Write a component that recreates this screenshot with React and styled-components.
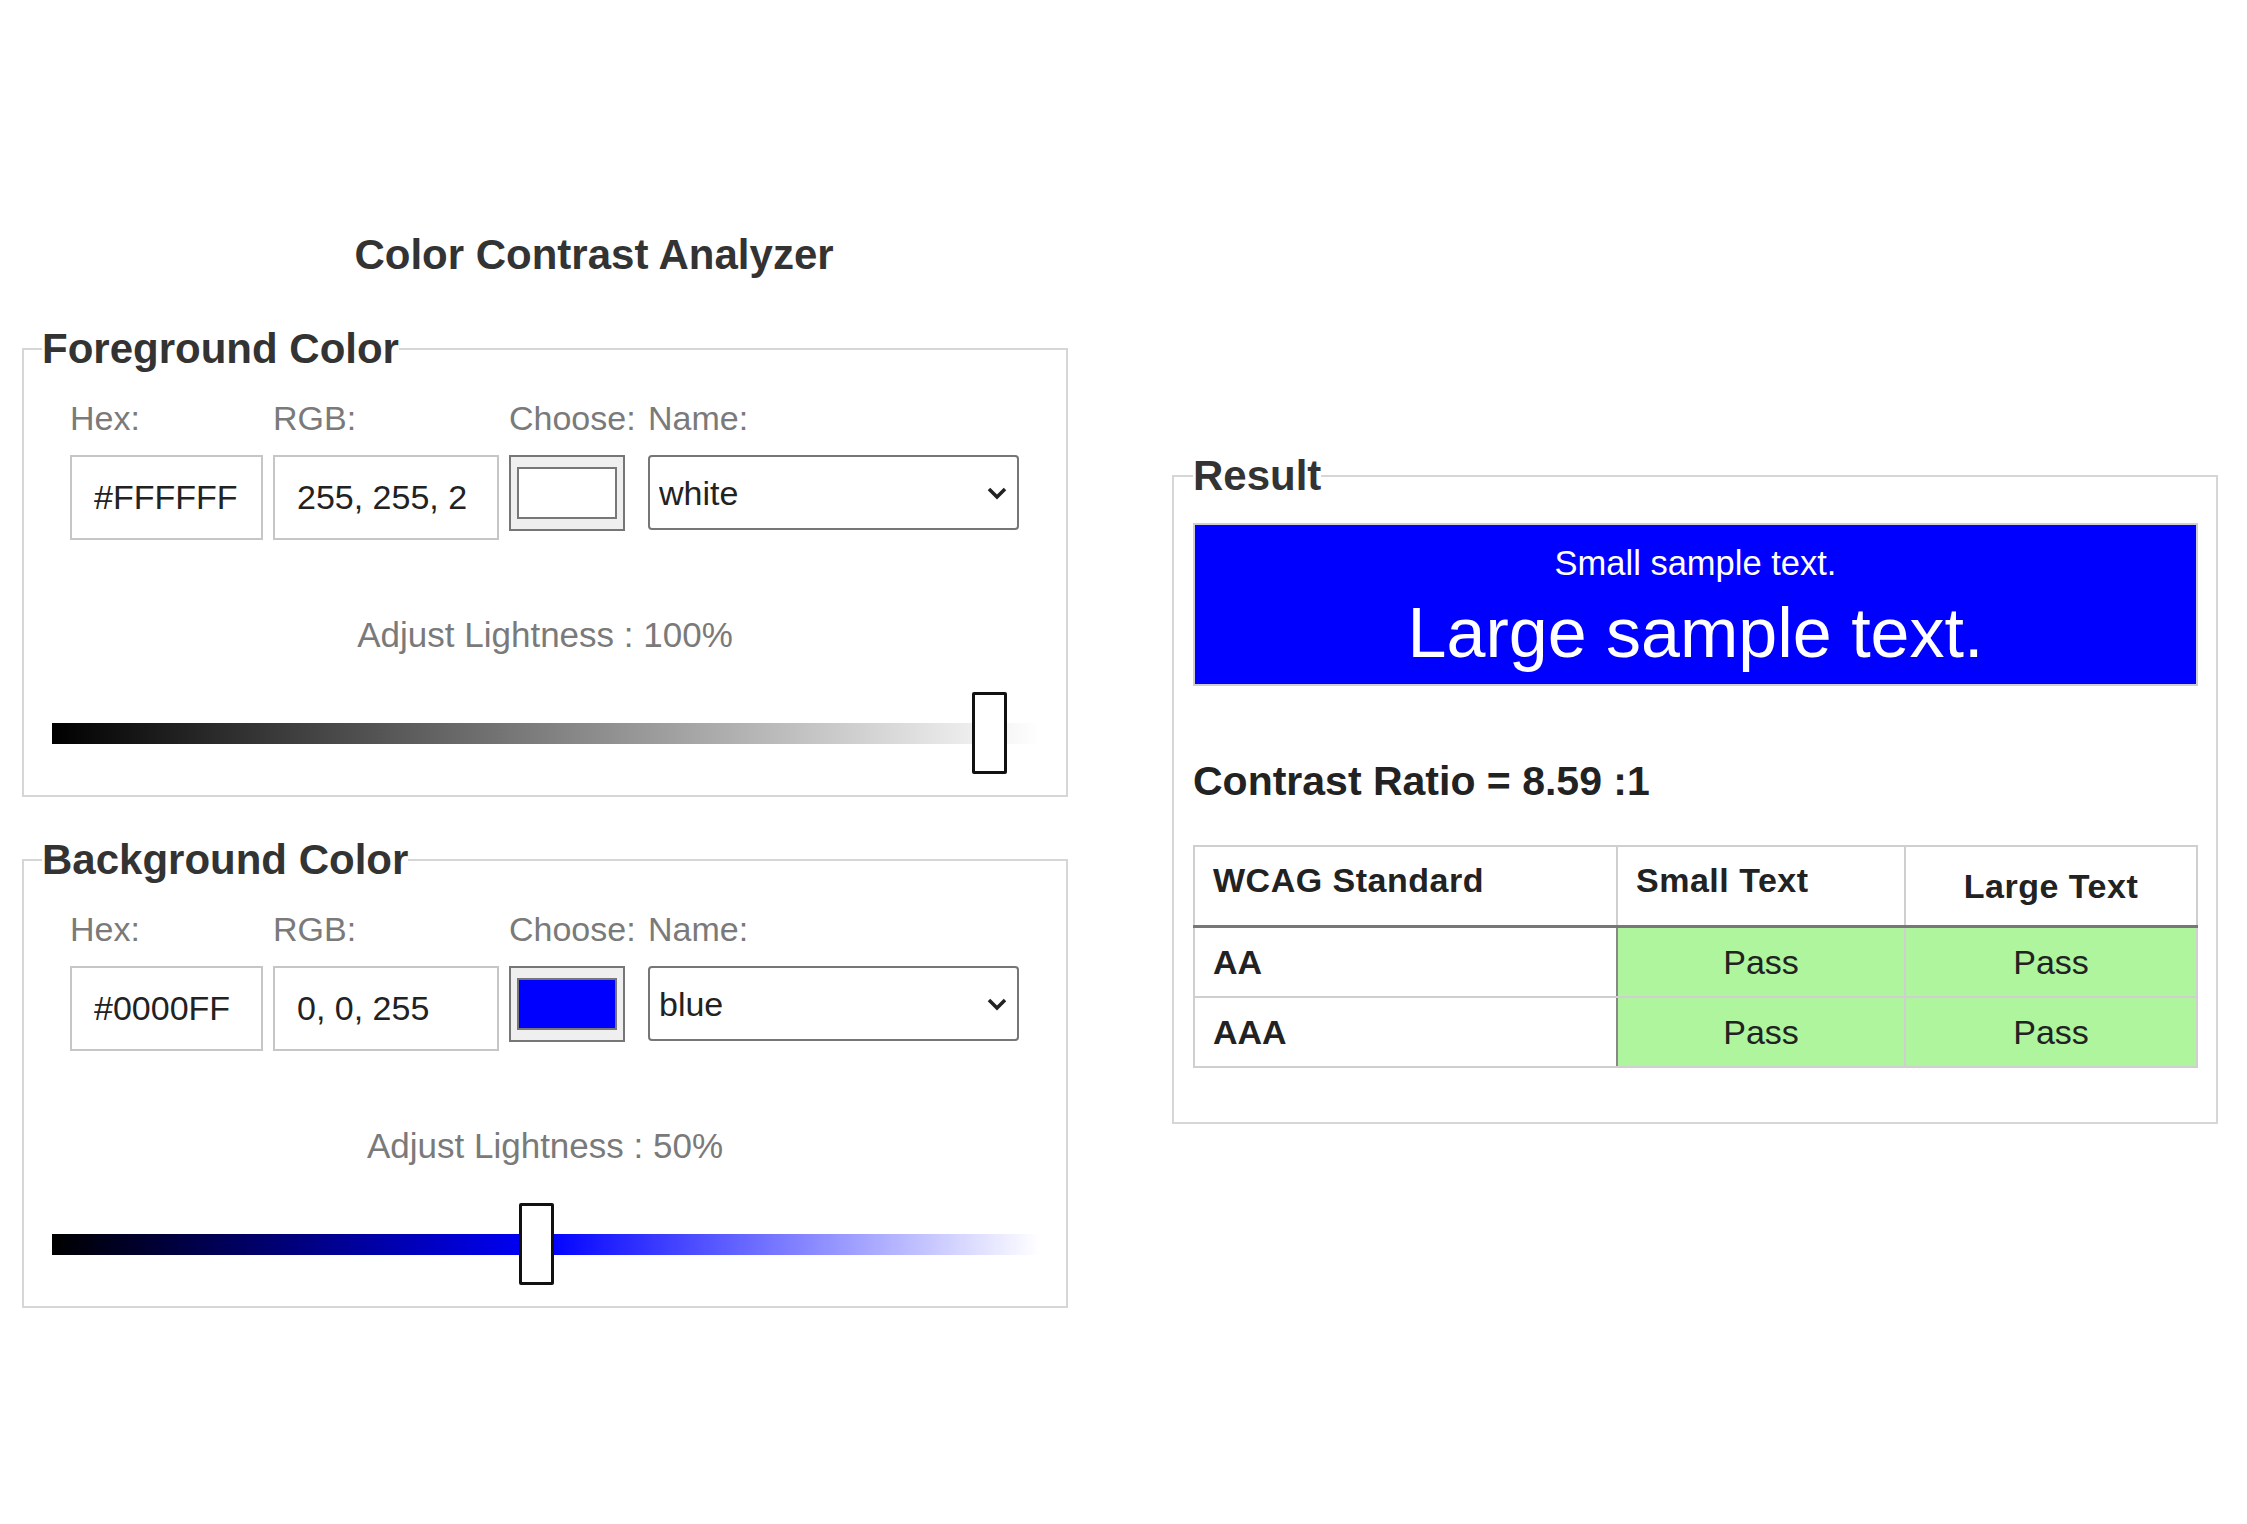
import React from 'react';
import styled, { createGlobalStyle } from 'styled-components';

const GlobalStyle = createGlobalStyle`
  html, body {
    margin: 0;
    padding: 0;
    background: #fff;
  }
  body {
    font-family: "Liberation Sans", Arial, Helvetica, sans-serif;
    color: #222;
  }
`;

const Page = styled.div`
  display: flex;
  align-items: flex-start;
  gap: 104px;
  width: 2247px;
  min-height: 1524px;
  box-sizing: border-box;
  padding: 231px 29px 0 22px;
`;

const Column = styled.div`
  flex: none;
  width: 1046px;
  display: flex;
  flex-direction: column;
  margin-top: ${p => p.$offset || 0}px;
`;

const Title = styled.h1`
  margin: 0;
  padding-left: 98px;
  font-size: 42px;
  line-height: 48px;
  font-weight: 700;
  color: #333;
  text-align: center;
`;

const Fieldset = styled.fieldset`
  margin: ${p => p.$top}px 0 0;
  padding: 0 18px 21px;
  border: 2px solid #d6d6d6;
  min-width: 0;
`;

const Legend = styled.legend`
  padding: 0;
  font-size: 42px;
  line-height: 46px;
  font-weight: 700;
  color: #333;
`;

const FieldRow = styled.div`
  display: flex;
  align-items: flex-start;
  gap: 10px;
  margin: 26px 0 0 28px;
`;

const Field = styled.div`
  display: flex;
  flex-direction: column;
  gap: 17px;
  width: ${p => p.$w}px;
  flex: none;
`;

const Label = styled.span`
  font-size: 34px;
  line-height: 40px;
  color: #7a7a7a;
  white-space: nowrap;
`;

const TextInput = styled.input`
  width: 100%;
  height: 85px;
  box-sizing: border-box;
  margin: 0;
  padding: 0 ${p => p.$padRight || 6}px 0 22px;
  border: 2px solid #c6c6c6;
  font-family: inherit;
  font-size: 34px;
  color: #222;
  background: #fff;
  outline: none;
`;

const Swatch = styled.div`
  width: 116px;
  height: 76px;
  box-sizing: border-box;
  padding: 10px 6px;
  border: 2px solid #767676;
  background: #efefef;
`;

const SwatchColor = styled.div`
  height: 100%;
  box-sizing: border-box;
  border: 2px solid #777;
  background: ${p => p.$color};
`;

const SelectWrap = styled.div`
  position: relative;
  width: 100%;
`;

const Select = styled.select`
  appearance: none;
  width: 100%;
  height: 75px;
  box-sizing: border-box;
  margin: 0;
  padding: 0 0 0 9px;
  border: 2px solid #767676;
  border-radius: 4px;
  background: #fff;
  font-family: inherit;
  font-size: 34px;
  color: #222;
`;

const Chevron = styled.svg`
  position: absolute;
  right: 11px;
  top: 31px;
  width: 22px;
  height: 14px;
  pointer-events: none;
`;

const AdjustLabel = styled.div`
  margin-top: 75px;
  font-size: 35px;
  line-height: 40px;
  color: #7a7a7a;
  text-align: center;
`;

const Slider = styled.div`
  position: relative;
  display: flex;
  align-items: center;
  height: 82px;
  margin: 37px 9px 0 10px;
`;

const Track = styled.div`
  width: 100%;
  height: 21px;
  background: ${p => p.$gradient};
`;

const Thumb = styled.div`
  position: absolute;
  top: 0;
  width: 35px;
  height: 82px;
  box-sizing: border-box;
  border: 3px solid #111;
  border-radius: 2px;
  background: #fff;
`;

const ResultSet = styled(Fieldset)`
  padding: 0 18px 54px 19px;
`;

const SampleBox = styled.div`
  margin-top: 24px;
  padding: 18px 0 11px;
  border: 2px solid #cfcfcf;
  background: ${p => p.$bg};
  color: ${p => p.$fg};
  text-align: center;
`;

const SmallSample = styled.div`
  font-size: 34.5px;
  line-height: 40px;
`;

const LargeSample = styled.div`
  margin-top: 10px;
  font-size: 70px;
  line-height: 80px;
`;

const Ratio = styled.div`
  margin-top: 71px;
  font-size: 41px;
  line-height: 48px;
  font-weight: 700;
  color: #222;
`;

const Table = styled.table`
  margin-top: 40px;
  width: 100%;
  border-collapse: collapse;
  border: 2px solid #cfcfcf;
  table-layout: fixed;
`;

const Th = styled.th`
  height: 80px;
  box-sizing: border-box;
  padding: ${p => (p.$middle ? '0' : '13px 18px 0')};
  border: 2px solid #cfcfcf;
  border-bottom: 3px solid #777;
  vertical-align: ${p => (p.$middle ? 'middle' : 'top')};
  text-align: ${p => (p.$middle ? 'center' : 'left')};
  font-size: 34px;
  line-height: 40px;
  font-weight: 700;
  letter-spacing: 0.5px;
  color: #222;
`;

const Td = styled.td`
  height: 68px;
  padding: 0 18px;
  border: 2px solid #cfcfcf;
  vertical-align: middle;
  font-size: 34px;
  line-height: 40px;
  color: #222;
  ${p =>
    p.$pass
      ? `
    background: #aef59e;
    text-align: center;
  `
      : `
    font-weight: 700;
    border-right: 2px solid #888;
  `}
`;

const panels = [
  {
    title: 'Foreground Color',
    hex: '#FFFFFF',
    rgb: '255, 255, 255',
    color: '#ffffff',
    name: 'white',
    lightness: 100,
    gradient: 'linear-gradient(to right, #000 0%, #fff 100%)',
    top: 47,
  },
  {
    title: 'Background Color',
    hex: '#0000FF',
    rgb: '0, 0, 255',
    color: '#0000ff',
    name: 'blue',
    lightness: 50,
    gradient: 'linear-gradient(to right, #000 0%, #0000ff 50%, #fff 100%)',
    top: 40,
  },
];

const rows = [
  { level: 'AA', small: 'Pass', large: 'Pass' },
  { level: 'AAA', small: 'Pass', large: 'Pass' },
];

function ColorPanel({ panel }) {
  const f = panel.lightness / 100;
  return (
    <Fieldset $top={panel.top}>
      <Legend>{panel.title}</Legend>
      <FieldRow>
        <Field $w={193}>
          <Label>Hex:</Label>
          <TextInput defaultValue={panel.hex} />
        </Field>
        <Field $w={226}>
          <Label>RGB:</Label>
          <TextInput defaultValue={panel.rgb} $padRight={31} />
        </Field>
        <Field $w={129}>
          <Label>Choose:</Label>
          <Swatch>
            <SwatchColor $color={panel.color} />
          </Swatch>
        </Field>
        <Field $w={371}>
          <Label>Name:</Label>
          <SelectWrap>
            <Select defaultValue={panel.name}>
              <option value="white">white</option>
              <option value="blue">blue</option>
              <option value="black">black</option>
            </Select>
            <Chevron viewBox="0 0 22 14">
              <path d="M3 3 L11 11 L19 3" fill="none" stroke="#222" strokeWidth="3.5" />
            </Chevron>
          </SelectWrap>
        </Field>
      </FieldRow>
      <AdjustLabel>Adjust Lightness : {panel.lightness}%</AdjustLabel>
      <Slider>
        <Track $gradient={panel.gradient} />
        <Thumb style={{ left: `calc(14px + ${f} * (100% - 81px))` }} />
      </Slider>
    </Fieldset>
  );
}

export default function App() {
  return (
    <>
      <GlobalStyle />
      <Page>
        <Column>
          <Title>Color Contrast Analyzer</Title>
          {panels.map(p => (
            <ColorPanel key={p.title} panel={p} />
          ))}
        </Column>
        <Column $offset={222}>
          <ResultSet $top={0}>
            <Legend>Result</Legend>
            <SampleBox $bg="#0000ff" $fg="#ffffff">
              <SmallSample>Small sample text.</SmallSample>
              <LargeSample>Large sample text.</LargeSample>
            </SampleBox>
            <Ratio>Contrast Ratio = 8.59 :1</Ratio>
            <Table>
              <thead>
                <tr>
                  <Th style={{ width: 423 }}>WCAG Standard</Th>
                  <Th style={{ width: 288 }}>Small Text</Th>
                  <Th $middle>Large Text</Th>
                </tr>
              </thead>
              <tbody>
                {rows.map(r => (
                  <tr key={r.level}>
                    <Td>{r.level}</Td>
                    <Td $pass>{r.small}</Td>
                    <Td $pass>{r.large}</Td>
                  </tr>
                ))}
              </tbody>
            </Table>
          </ResultSet>
        </Column>
      </Page>
    </>
  );
}
